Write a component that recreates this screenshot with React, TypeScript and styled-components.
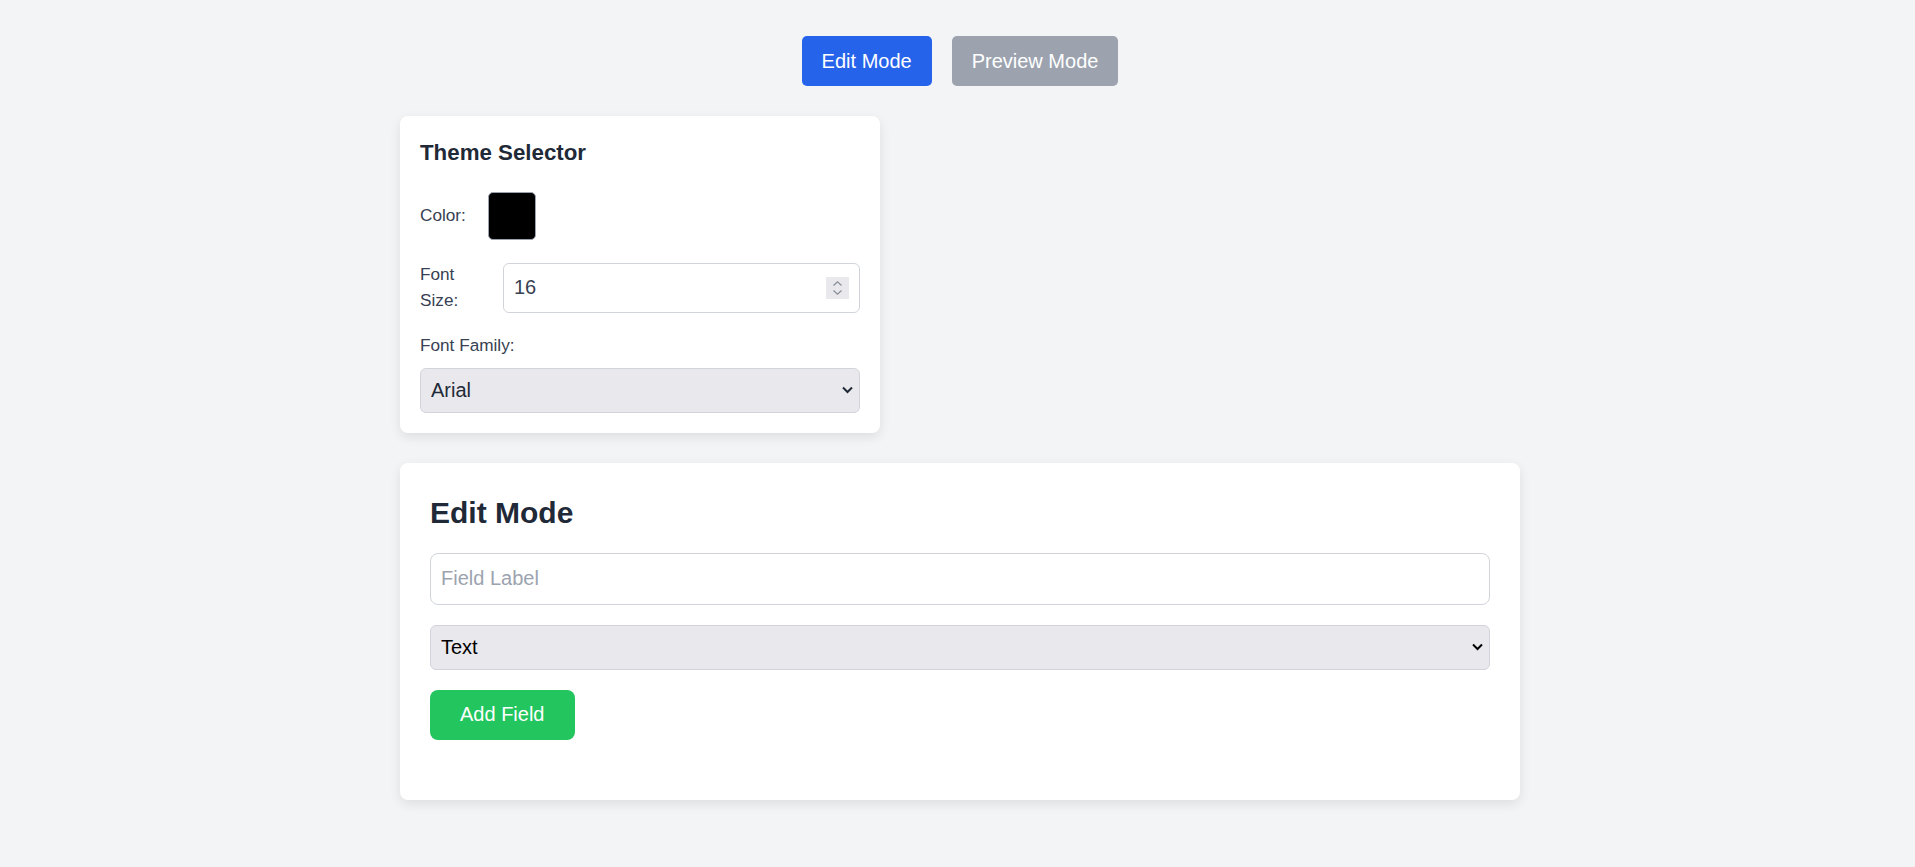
import React, { useState } from "react";
import styled, { createGlobalStyle } from "styled-components";

const GlobalStyle = createGlobalStyle`
  *, *::before, *::after { box-sizing: border-box; }
  html, body { margin: 0; padding: 0; background: #f3f4f6; }
  body {
    font-family: "Liberation Sans", Arial, sans-serif;
    line-height: 1.5;
    color: #1f2937;
  }
`;

const Page = styled.div`
  min-height: 867px;
  padding: 36px 0 40px 5px;
`;

const Column = styled.div`
  width: 1120px;
  margin: 0 auto;
  display: flex;
  flex-direction: column;
  align-items: flex-start;
  gap: 30px;
`;

const ModeBar = styled.div`
  align-self: stretch;
  display: flex;
  justify-content: center;
  gap: 20px;
`;

const ModeButton = styled.button<{ $active: boolean }>`
  height: 50px;
  padding: 0 20px;
  border: none;
  border-radius: 5px;
  font-family: "Liberation Sans", Arial, sans-serif;
  font-size: 20px;
  line-height: 23px;
  color: #ffffff;
  background: ${(p) => (p.$active ? "#2563eb" : "#9ca3af")};
  cursor: pointer;
`;

const Card = styled.section<{ $width: number; $pad: string }>`
  width: ${(p) => p.$width}px;
  align-self: ${(p) => (p.$width >= 1120 ? "stretch" : "flex-start")};
  background: #ffffff;
  border-radius: 8px;
  box-shadow: 0 4px 12px rgba(0, 0, 0, 0.09);
  padding: ${(p) => p.$pad};
`;

const CardTitle = styled.h3`
  margin: 0 0 23px;
  font-size: 22.3px;
  line-height: 33px;
  font-weight: 700;
  color: #1f2937;
`;

const Row = styled.div<{ $mb: number }>`
  display: flex;
  align-items: center;
  margin-bottom: ${(p) => p.$mb}px;
`;

const Label = styled.label<{ $gap: number; $wrap?: boolean }>`
  font-size: 17.2px;
  line-height: 25.5px;
  color: #374151;
  margin-right: ${(p) => p.$gap}px;
  flex: 0 0 auto;
  width: ${(p) => (p.$wrap ? "38px" : "auto")};
`;

const StackLabel = styled.label`
  display: block;
  font-size: 17.2px;
  line-height: 25.5px;
  color: #374151;
  margin-bottom: 9px;
`;

const ColorSwatch = styled.input`
  width: 48px;
  height: 48px;
  padding: 0;
  border: none;
  background: transparent;
  cursor: pointer;
  &::-webkit-color-swatch-wrapper { padding: 0; }
  &::-webkit-color-swatch {
    border: 1px solid #9ca3af;
    border-radius: 5px;
  }
`;

const NumberWrap = styled.div`
  position: relative;
  flex: 1;
  min-width: 0;
`;

const NumberInput = styled.input`
  display: block;
  width: 100%;
  height: 50px;
  padding: 0 40px 0 10px;
  border: 1px solid #d1d5db;
  border-radius: 6px;
  background: #ffffff;
  font-family: "Liberation Sans", Arial, sans-serif;
  font-size: 20px;
  color: #374151;
  outline: none;
  -moz-appearance: textfield;
  &::-webkit-inner-spin-button,
  &::-webkit-outer-spin-button {
    -webkit-appearance: none;
    margin: 0;
  }
`;

const Spinner = styled.span`
  position: absolute;
  right: 11px;
  top: 50%;
  transform: translateY(-50%);
  width: 23px;
  height: 22px;
  background: #e9e9ed;
  display: flex;
  align-items: center;
  justify-content: center;
  pointer-events: none;
`;

const SelectWrap = styled.div<{ $mb?: number }>`
  position: relative;
  margin-bottom: ${(p) => p.$mb ?? 0}px;
`;

const Select = styled.select<{ $color: string }>`
  display: block;
  width: 100%;
  height: 45px;
  padding: 0 34px 0 10px;
  border: 1px solid #d1d5db;
  border-radius: 6px;
  background-color: #e9e9ed;
  -webkit-appearance: none;
  appearance: none;
  font-family: "Liberation Sans", Arial, sans-serif;
  font-size: 20px;
  color: ${(p) => p.$color};
  outline: none;
`;

const Chevron = styled.svg`
  position: absolute;
  right: 7px;
  top: 50%;
  transform: translateY(-50%);
  pointer-events: none;
`;

const SectionTitle = styled.h2`
  margin: 0 0 20px;
  font-size: 30px;
  line-height: 40px;
  font-weight: 700;
  color: #1f2937;
`;

const TextInput = styled.input`
  display: block;
  width: 100%;
  height: 52px;
  padding: 0 10px;
  margin-bottom: 20px;
  border: 1px solid #d1d5db;
  border-radius: 8px;
  background: #ffffff;
  font-family: "Liberation Sans", Arial, sans-serif;
  font-size: 20px;
  color: #1f2937;
  outline: none;
  &::placeholder { color: #9ca3af; }
`;

const AddButton = styled.button`
  height: 50px;
  padding: 0 30px;
  border: none;
  border-radius: 8px;
  background: #22c55e;
  color: #ffffff;
  font-family: "Liberation Sans", Arial, sans-serif;
  font-size: 20px;
  line-height: 23px;
  cursor: pointer;
`;

function SelectArrow({ color }: { color: string }) {
  return (
    <Chevron width="11" height="8" viewBox="0 0 11 8" fill="none">
      <path d="M1 1.5 L5.5 6 L10 1.5" stroke={color} strokeWidth="2" />
    </Chevron>
  );
}

export default function App() {
  const [mode, setMode] = useState<"edit" | "preview">("edit");
  const [color, setColor] = useState("#000000");
  const [size, setSize] = useState("16");
  const [family, setFamily] = useState("Arial");
  const [label, setLabel] = useState("");
  const [type, setType] = useState("text");

  return (
    <>
      <GlobalStyle />
      <Page>
        <Column>
          <ModeBar>
            <ModeButton $active={mode === "edit"} onClick={() => setMode("edit")}>
              Edit Mode
            </ModeButton>
            <ModeButton $active={mode === "preview"} onClick={() => setMode("preview")}>
              Preview Mode
            </ModeButton>
          </ModeBar>

          <Card $width={480} $pad="20px">
            <CardTitle>Theme Selector</CardTitle>
            <Row $mb={22}>
              <Label $gap={22}>Color:</Label>
              <ColorSwatch type="color" value={color} onChange={(e) => setColor(e.target.value)} />
            </Row>
            <Row $mb={20}>
              <Label $gap={45} $wrap>
                Font Size:
              </Label>
              <NumberWrap>
                <NumberInput type="number" value={size} onChange={(e) => setSize(e.target.value)} />
                <Spinner>
                  <svg width="11" height="16" viewBox="0 0 11 16" fill="none">
                    <path d="M1.5 5.5 L5.5 1.8 L9.5 5.5" stroke="#8a8f98" strokeWidth="1.3" />
                    <path d="M1.5 10.5 L5.5 14.2 L9.5 10.5" stroke="#8a8f98" strokeWidth="1.3" />
                  </svg>
                </Spinner>
              </NumberWrap>
            </Row>
            <StackLabel>Font Family:</StackLabel>
            <SelectWrap>
              <Select $color="#1f2937" value={family} onChange={(e) => setFamily(e.target.value)}>
                <option>Arial</option>
                <option>Verdana</option>
                <option>Times New Roman</option>
                <option>Courier New</option>
              </Select>
              <SelectArrow color="#1f2937" />
            </SelectWrap>
          </Card>

          <Card $width={1120} $pad="30px 30px 60px">
            <SectionTitle>Edit Mode</SectionTitle>
            <TextInput
              placeholder="Field Label"
              value={label}
              onChange={(e) => setLabel(e.target.value)}
            />
            <SelectWrap $mb={20}>
              <Select $color="#000000" value={type} onChange={(e) => setType(e.target.value)}>
                <option value="text">Text</option>
                <option value="number">Number</option>
                <option value="email">Email</option>
                <option value="checkbox">Checkbox</option>
              </Select>
              <SelectArrow color="#000000" />
            </SelectWrap>
            <AddButton>Add Field</AddButton>
          </Card>
        </Column>
      </Page>
    </>
  );
}
